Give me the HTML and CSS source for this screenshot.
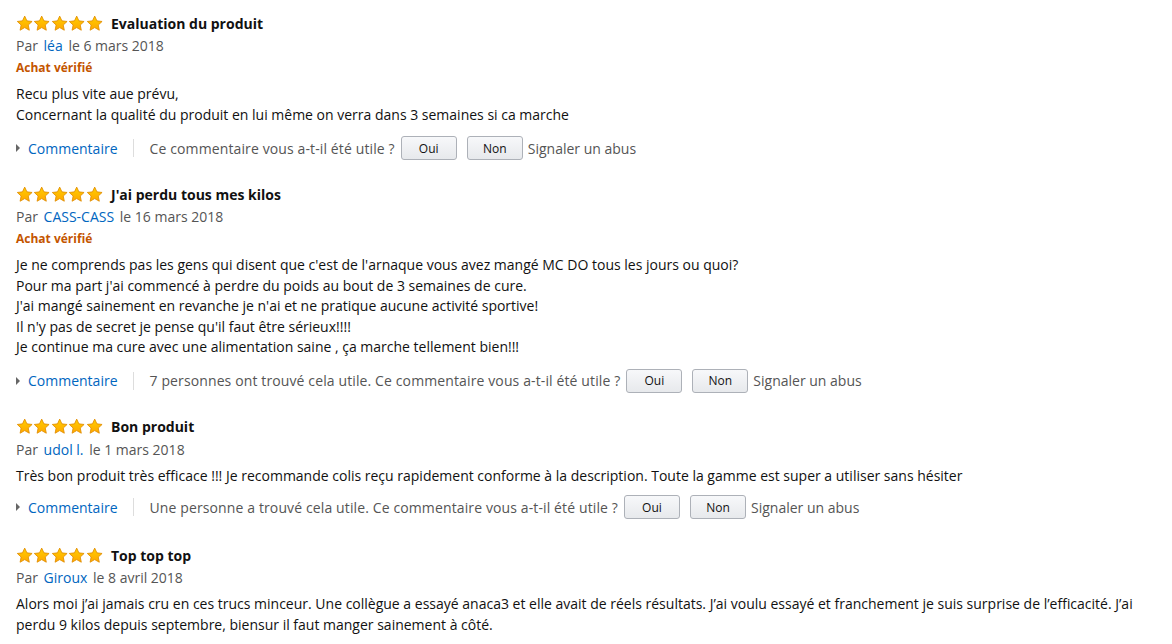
FILE: index.html
```html
<!DOCTYPE html>
<html lang="fr">
<head>
  <meta charset="UTF-8">
  <title>Commentaires clients</title>
  <link rel="stylesheet" href="styles.css">
</head>
<body>
  <svg width="0" height="0" style="position:absolute">
    <defs>
      <linearGradient id="star-fill" x1="0" y1="0" x2="0" y2="1">
        <stop offset="0" stop-color="#ffce00"/>
        <stop offset="1" stop-color="#ffa700"/>
      </linearGradient>
      <symbol id="star" viewBox="0 0 20 20">
        <path d="M10 1.3l2.6 5.6 6.1.7-4.5 4.2 1.2 6.1L10 14.8l-5.4 3.1 1.2-6.1L1.3 7.6l6.1-.7z" fill="url(#star-fill)" stroke="#e08c00" stroke-width="1" stroke-linejoin="round"/>
      </symbol>
    </defs>
  </svg>

  <div class="reviews">

    <div class="review">
      <div class="review-head">
        <span class="stars"><svg><use href="#star"/></svg><svg><use href="#star"/></svg><svg><use href="#star"/></svg><svg><use href="#star"/></svg><svg><use href="#star"/></svg></span>
        <span class="review-title">Evaluation du produit</span>
      </div>
      <div class="byline">Par <a href="#">léa</a> le 6 mars 2018</div>
      <div class="verified">Achat vérifié</div>
      <div class="review-body">
        Recu plus vite aue prévu,<br>
        Concernant la qualité du produit en lui même on verra dans 3 semaines si ca marche
      </div>
      <div class="actions">
        <a class="comment-link" href="#"><span class="arrow"></span>Commentaire</a>
        <span class="divider"></span>
        <span class="helpful">Ce commentaire vous a-t-il été utile ?</span>
        <button class="vote">Oui</button>
        <button class="vote">Non</button>
        <span class="report">Signaler un abus</span>
      </div>
    </div>

    <div class="review">
      <div class="review-head">
        <span class="stars"><svg><use href="#star"/></svg><svg><use href="#star"/></svg><svg><use href="#star"/></svg><svg><use href="#star"/></svg><svg><use href="#star"/></svg></span>
        <span class="review-title">J'ai perdu tous mes kilos</span>
      </div>
      <div class="byline">Par <a href="#">CASS-CASS</a> le 16 mars 2018</div>
      <div class="verified">Achat vérifié</div>
      <div class="review-body">
        Je ne comprends pas les gens qui disent que c'est de l'arnaque vous avez mangé MC DO tous les jours ou quoi?<br>
        Pour ma part j'ai commencé à perdre du poids au bout de 3 semaines de cure.<br>
        J'ai mangé sainement en revanche je n'ai et ne pratique aucune activité sportive!<br>
        Il n'y pas de secret je pense qu'il faut être sérieux!!!!<br>
        Je continue ma cure avec une alimentation saine , ça marche tellement bien!!!
      </div>
      <div class="actions">
        <a class="comment-link" href="#"><span class="arrow"></span>Commentaire</a>
        <span class="divider"></span>
        <span class="helpful">7 personnes ont trouvé cela utile. Ce commentaire vous a-t-il été utile ?</span>
        <button class="vote">Oui</button>
        <button class="vote">Non</button>
        <span class="report">Signaler un abus</span>
      </div>
    </div>

    <div class="review review-short">
      <div class="review-head">
        <span class="stars"><svg><use href="#star"/></svg><svg><use href="#star"/></svg><svg><use href="#star"/></svg><svg><use href="#star"/></svg><svg><use href="#star"/></svg></span>
        <span class="review-title">Bon produit</span>
      </div>
      <div class="byline">Par <a href="#">udol l.</a> le 1 mars 2018</div>
      <div class="review-body">
        Très bon produit très efficace !!! Je recommande colis reçu rapidement conforme à la description. Toute la gamme est super a utiliser sans hésiter
      </div>
      <div class="actions">
        <a class="comment-link" href="#"><span class="arrow"></span>Commentaire</a>
        <span class="divider"></span>
        <span class="helpful">Une personne a trouvé cela utile. Ce commentaire vous a-t-il été utile ?</span>
        <button class="vote">Oui</button>
        <button class="vote">Non</button>
        <span class="report">Signaler un abus</span>
      </div>
    </div>

    <div class="review">
      <div class="review-head">
        <span class="stars"><svg><use href="#star"/></svg><svg><use href="#star"/></svg><svg><use href="#star"/></svg><svg><use href="#star"/></svg><svg><use href="#star"/></svg></span>
        <span class="review-title">Top top top</span>
      </div>
      <div class="byline">Par <a href="#">Giroux</a> le 8 avril 2018</div>
      <div class="review-body">
        Alors moi j’ai jamais cru en ces trucs minceur. Une collègue a essayé anaca3 et elle avait de réels résultats. J’ai voulu essayé et franchement je suis surprise de l’efficacité. J’ai perdu 9 kilos depuis septembre, biensur il faut manger sainement à côté.
      </div>
    </div>

  </div>
</body>
</html>
```

FILE: styles.css
```css
body {
  margin: 0;
  padding: 0;
  font-family: 'Open Sans', 'Liberation Sans', sans-serif;
  font-size: 14px;
  color: #111;
  background-color: #ffffff;
}

a {
  color: #0066c0;
  text-decoration: none;
}

.reviews {
  padding: 12px 20px 0 16px;
}

.review {
  margin-bottom: 20px;
}

.review-short {
  margin-bottom: 22px;
}

.review-short .actions {
  margin-top: 6px;
}

.review-head {
  display: flex;
  align-items: center;
  height: 22px;
}

.stars {
  display: flex;
  width: 87px;
  margin-right: 8px;
}

.stars svg {
  width: 17.4px;
  height: 17px;
}

.review-title {
  font-weight: 700;
}

.byline {
  color: #555;
  line-height: 23px;
}

.byline a {
  margin: 0 2px;
}

.verified {
  color: #c45500;
  font-size: 12px;
  font-weight: 700;
  line-height: 22px;
}

.review-body {
  margin-top: 5px;
  line-height: 20.5px;
}

.actions {
  display: flex;
  align-items: center;
  margin-top: 8px;
  height: 30px;
  color: #555;
}

.comment-link {
  display: flex;
  align-items: center;
}

.arrow {
  width: 0;
  height: 0;
  border-top: 4px solid transparent;
  border-bottom: 4px solid transparent;
  border-left: 4px solid #666;
  margin-right: 8px;
}

.divider {
  width: 1px;
  height: 18px;
  background-color: #ddd;
  margin: 0 16px 0 15px;
}

.helpful {
  letter-spacing: 0.12px;
}

.vote {
  width: 56px;
  height: 24px;
  margin-left: 6px;
  margin-right: 4px;
  background: linear-gradient(#f7f8fa, #e7e9ec);
  border: 1px solid #adb1b8;
  border-radius: 3px;
  font-family: inherit;
  font-size: 12px;
  color: #111;
  padding: 0;
}

.vote + .vote {
  margin-left: 6px;
}

.report {
  margin-left: 1px;
}
```
